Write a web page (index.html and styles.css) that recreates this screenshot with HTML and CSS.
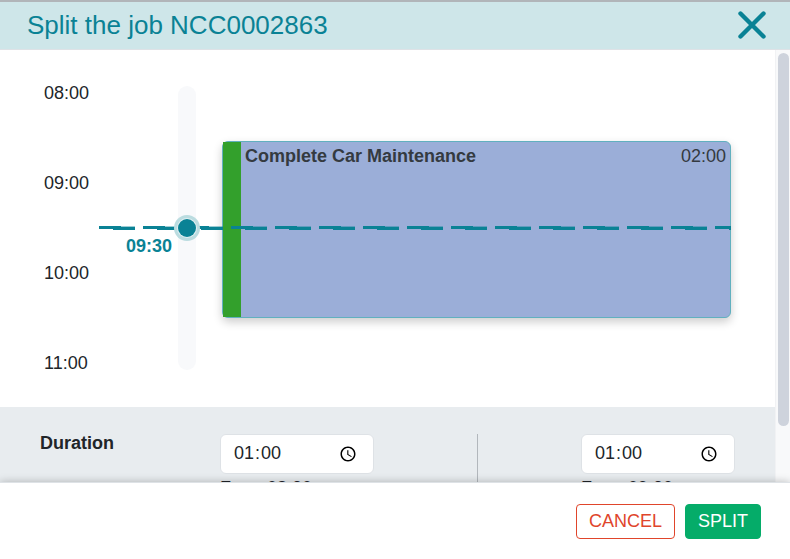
FILE: index.html
```html
<!DOCTYPE html>
<html lang="en">
<head>
    <meta charset="UTF-8">
    <meta name="viewport" content="width=device-width, initial-scale=1.0">
    <title>Split the job</title>
    <link rel="stylesheet" href="styles.css">
</head>
<body>
    <div class="modal">
        <div class="modal-header">
            <h1>Split the job NCC0002863</h1>
            <button class="close" aria-label="Close">
                <svg width="28" height="28" viewBox="0 0 28 28">
                    <path d="M2.5 2.5 L25.5 25.5 M25.5 2.5 L2.5 25.5" stroke="currentColor" stroke-width="4.4" stroke-linecap="round"/>
                </svg>
            </button>
        </div>

        <div class="modal-body">
            <div class="content">
                <div class="timeline">
                    <div class="hours">
                        <span>08:00</span>
                        <span>09:00</span>
                        <span>10:00</span>
                        <span>11:00</span>
                    </div>
                    <input type="range" class="slider" min="480" max="660" value="570" aria-label="Split time">
                    <div class="job">
                        <div class="job-color"></div>
                        <div class="job-title">Complete Car Maintenance</div>
                        <div class="job-time">02:00</div>
                    </div>
                    <svg class="split-line" aria-hidden="true">
                        <defs>
                            <pattern id="dash" width="44" height="4" patternUnits="userSpaceOnUse">
                                <path d="M0 0 H22 V1 H36 V4 H14 V3 H0 Z" fill="#0a8295"/>
                                <path d="M22 0 H36 V1 H22 Z" fill="#0a8295" opacity="0.4"/>
                            </pattern>
                        </defs>
                        <rect width="100%" height="4" fill="url(#dash)"/>
                    </svg>
                    <div class="split-time">09:30</div>
                </div>

                <div class="durations">
                    <div class="durations-title">Duration</div>
                    <div class="part">
                        <input type="time" value="01:00" aria-label="Duration of the first part">
                        <div class="range">From 08:30 to 09:30</div>
                    </div>
                    <div class="divider"></div>
                    <div class="part">
                        <input type="time" value="01:00" aria-label="Duration of the second part">
                        <div class="range">From 09:30 to 10:30</div>
                    </div>
                </div>
            </div>
            <div class="scrollbar"><div class="scrollbar-thumb"></div></div>
        </div>

        <div class="modal-footer">
            <button class="btn btn-cancel">CANCEL</button>
            <button class="btn btn-split">SPLIT</button>
        </div>
    </div>
</body>
</html>
```
FILE: styles.css
```css
* {
    box-sizing: border-box;
}

body {
    margin: 0;
    font-family: "Liberation Sans", Arial, sans-serif;
    font-size: 18px;
    line-height: 24px;
    color: #212529;
    background-color: white;
}

button, input {
    font-family: inherit;
    font-size: inherit;
    color: inherit;
}

.modal {
    display: flex;
    flex-direction: column;
    height: 100vh;
    overflow: hidden;
    border-top: 2px solid #b1b5b9;
}

/* header */
.modal-header {
    display: flex;
    justify-content: space-between;
    align-items: center;
    height: 48px;
    padding: 0 24px 2px 27px;
    background-color: #cee6e9;
    border-bottom: 1px solid #dee2e6;
    color: #0a8295;
}

.modal-header h1 {
    margin: 0;
    font-size: 26px;
    font-weight: normal;
    line-height: 32px;
}

.close {
    padding: 0;
    border: none;
    background: none;
    cursor: pointer;
}

.close svg {
    display: block;
}

/* body */
.modal-body {
    display: flex;
    flex: 1;
    min-height: 0;
}

.content {
    flex: 1;
    overflow: hidden;
}

.scrollbar {
    width: 15px;
    padding: 3px 1px 0 2px;
    background-color: #f8f9fa;
    border-left: 1px solid #f1f2f4;
}

.scrollbar-thumb {
    height: 87%;
    border-radius: 6px;
    background-color: #ced3dc;
}

.timeline {
    position: relative;
    display: flex;
    padding: 36px 44px 37px;
}

.hours {
    display: flex;
    flex-direction: column;
    justify-content: space-between;
    width: 134px;
    line-height: 14px;
}

.slider {
    -webkit-appearance: none;
    appearance: none;
    writing-mode: vertical-lr;
    position: relative;
    z-index: 2;
    width: 18px;
    height: 284px;
    margin: 0 26px 0 0;
    border-radius: 9px;
    background-color: #f8f9fb;
}

.slider::-webkit-slider-thumb {
    -webkit-appearance: none;
    width: 18px;
    height: 18px;
    border-radius: 50%;
    background-color: #0a8295;
    box-shadow: 0 0 0 1px #e1f0f2, 0 0 0 4px #bbdce0;
    cursor: pointer;
}

.job {
    display: flex;
    flex: 1;
    align-self: flex-start;
    height: 177px;
    margin-top: 55px;
    padding-right: 4px;
    border: 1px solid #61b0bf;
    border-radius: 6px;
    background-color: #9baed8;
    box-shadow: 0 4px 10px rgba(0,0,0,0.2);
    line-height: 28px;
    color: #343a40;
}

.job-color {
    width: 18px;
    margin-right: 4px;
    background-color: #33a02c;
}

.job-title {
    flex: 1;
    font-weight: bold;
}

.split-line {
    position: absolute;
    top: 176px;
    left: 99px;
    width: calc(100% - 143px);
    height: 4px;
}

.split-time {
    position: absolute;
    top: 184px;
    left: 126px;
    font-weight: bold;
    color: #0a8295;
}

/* durations */
.durations {
    display: flex;
    justify-content: space-between;
    padding: 27px 40px;
    background-color: #e8ecef;
}

.durations-title {
    width: 180px;
    margin-right: -103px;
    line-height: 18px;
    font-weight: bold;
}

.part {
    width: 154px;
}

.part input {
    display: block;
    width: 100%;
    height: 40px;
    padding: 6px 12px;
    border: 1px solid #dee2e6;
    border-radius: 6px;
    background-color: white;
}

.part input::-webkit-datetime-edit-ampm-field {
    display: none;
}

.range {
    margin-top: 2px;
}

.divider {
    width: 1px;
    background-color: #b2b7bc;
}

/* footer */
.modal-footer {
    position: relative;
    display: flex;
    justify-content: flex-end;
    gap: 10px;
    padding: 21px 29px 20px;
    border-top: 1px solid #dee2e6;
    background-color: white;
    box-shadow: 0 0 8px rgba(0,0,0,0.25);
}

.btn {
    height: 35px;
    padding: 0 12px;
    border: 1px solid;
    border-radius: 4px;
    cursor: pointer;
}

.btn-cancel {
    border-color: #e0452b;
    background-color: white;
    color: #e0452b;
}

.btn-split {
    border-color: #05ac69;
    background-color: #05ac69;
    color: white;
}
```
